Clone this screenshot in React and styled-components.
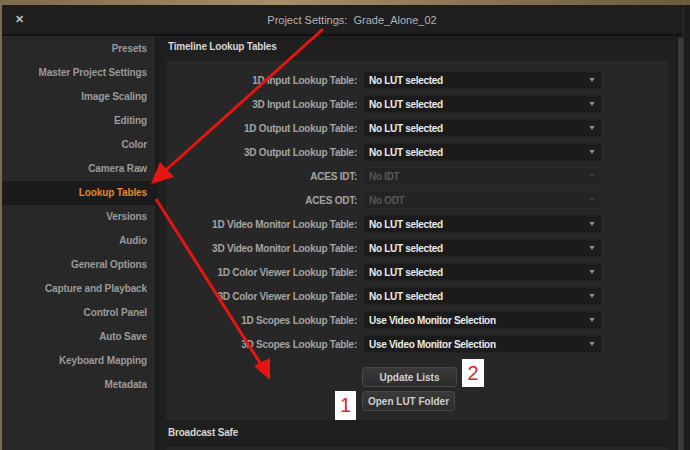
import React from 'react';
import styled, { createGlobalStyle } from 'styled-components';

const GlobalStyle = createGlobalStyle`
  body {
    margin: 0;
    background: #1b1b1b;
    font-family: "Liberation Sans", Arial, sans-serif;
  }
`;

const navItems = [
  'Presets',
  'Master Project Settings',
  'Image Scaling',
  'Editing',
  'Color',
  'Camera Raw',
  'Lookup Tables',
  'Versions',
  'Audio',
  'General Options',
  'Capture and Playback',
  'Control Panel',
  'Auto Save',
  'Keyboard Mapping',
  'Metadata',
];

const lutRows = [
  { label: '1D Input Lookup Table:', value: 'No LUT selected' },
  { label: '3D Input Lookup Table:', value: 'No LUT selected' },
  { label: '1D Output Lookup Table:', value: 'No LUT selected' },
  { label: '3D Output Lookup Table:', value: 'No LUT selected' },
  { label: 'ACES IDT:', value: 'No IDT', disabled: true },
  { label: 'ACES ODT:', value: 'No ODT', disabled: true },
  { label: '1D Video Monitor Lookup Table:', value: 'No LUT selected' },
  { label: '3D Video Monitor Lookup Table:', value: 'No LUT selected' },
  { label: '1D Color Viewer Lookup Table:', value: 'No LUT selected' },
  { label: '3D Color Viewer Lookup Table:', value: 'No LUT selected' },
  { label: '1D Scopes Lookup Table:', value: 'Use Video Monitor Selection' },
  { label: '3D Scopes Lookup Table:', value: 'Use Video Monitor Selection' },
];

const App = () => {
  return (
    <Screen>
      <GlobalStyle />
      <Dialog>
        <TitleBar>
          <CloseButton>✕</CloseButton>
          <Title>Project Settings:&nbsp; Grade_Alone_02</Title>
        </TitleBar>
        <Body>
          <Sidebar>
            {navItems.map((item) => (
              <NavItem key={item} $active={item === 'Lookup Tables'}>
                {item}
              </NavItem>
            ))}
          </Sidebar>
          <Content>
            <SectionTitle>Timeline Lookup Tables</SectionTitle>
            <Panel>
              {lutRows.map((row) => (
                <Row key={row.label}>
                  <Label>{row.label}</Label>
                  <Select $disabled={row.disabled}>
                    <span>{row.value}</span>
                    <Caret $disabled={row.disabled} />
                  </Select>
                </Row>
              ))}
              <Buttons>
                <Button $width={95}>Update Lists</Button>
                <Button $width={93}>Open LUT Folder</Button>
              </Buttons>
            </Panel>
            <SectionTitle $top={2}>Broadcast Safe</SectionTitle>
            <Panel />
          </Content>
          <Scrollbar>
            <Thumb />
          </Scrollbar>
        </Body>
      </Dialog>
      <Backdrop />

      <Arrows width="690" height="450" viewBox="0 0 690 450">
        <line x1="323" y1="29" x2="166" y2="170" stroke="#e8140f" strokeWidth="3" />
        <polygon points="151,184 160,162 174,177" fill="#e8140f" />
        <line x1="156" y1="199" x2="262" y2="366" stroke="#e8140f" strokeWidth="3" />
        <polygon points="270,380 254,366 270,358" fill="#e8140f" />
      </Arrows>
      <Marker $x={462} $y={359} $w={22} $h={28}>2</Marker>
      <Marker $x={335} $y={391} $w={21} $h={29}>1</Marker>
    </Screen>
  );
};

export default App;

const Screen = styled.div`
  position: relative;
  width: 690px;
  height: 450px;
  overflow: hidden;
  background: linear-gradient(to right, #7d6a4c 0, #a58e68 40%, #6b5a40 100%);
`;

const Backdrop = styled.div`
  position: absolute;
  right: 0;
  top: 5px;
  width: 6px;
  bottom: 0;
  background: #1c1c1c;
  border-left: 1px solid #2e2e2e;
`;

const Dialog = styled.div`
  display: flex;
  flex-direction: column;
  width: 682px;
  height: 445px;
  margin: 5px 0 0 2px;
  background: #1f1f1f;
`;

const TitleBar = styled.div`
  position: relative;
  display: flex;
  align-items: center;
  justify-content: center;
  height: 29px;
  background: #1e1e1e;
  border-bottom: 2px solid #111111;
`;

const CloseButton = styled.span`
  position: absolute;
  left: 13px;
  top: 8px;
  color: #bdbdbd;
  font-size: 11px;
  font-weight: bold;
`;

const Title = styled.div`
  margin-left: 18px;
  color: #b4b4b4;
  font-size: 11px;
`;

const Body = styled.div`
  display: flex;
  flex: 1;
  min-height: 0;
`;

const Sidebar = styled.div`
  display: flex;
  flex-direction: column;
  width: 153px;
  flex-shrink: 0;
  padding-top: 1px;
  background: #282828;
  border-right: 3px solid #1b1b1b;
`;

const NavItem = styled.div`
  height: 24px;
  line-height: 24px;
  padding-right: 8px;
  text-align: right;
  font-size: 10px;
  font-weight: bold;
  letter-spacing: -0.12px;
  color: ${(p) => (p.$active ? '#e0882e' : '#9a9a9a')};
  background: ${(p) => (p.$active ? '#1b1b1b' : 'transparent')};
`;

const Content = styled.div`
  flex: 1;
  display: flex;
  flex-direction: column;
  padding: 0 8px;
  background: #1f1f1f;
  overflow: hidden;
`;

const SectionTitle = styled.div`
  height: 20px;
  line-height: 20px;
  margin: ${(p) => p.$top || 0}px 0 4px;
  padding: 1px 0 0 2px;
  color: #d6d6d6;
  font-size: 10px;
  font-weight: bold;
  letter-spacing: -0.2px;
  flex-shrink: 0;
`;

const Panel = styled.div`
  display: flex;
  flex-direction: column;
  gap: 6px;
  padding: 10px 0 9px;
  background: #272727;
  flex-shrink: 0;
  min-height: 20px;
`;

const Row = styled.div`
  display: grid;
  grid-template-columns: 191px 239px;
  column-gap: 6px;
  align-items: center;
  height: 18px;
`;

const Label = styled.div`
  text-align: right;
  color: #a4a4a4;
  font-size: 10px;
  font-weight: bold;
  letter-spacing: -0.25px;
  white-space: nowrap;
`;

const Select = styled.div`
  display: flex;
  align-items: center;
  justify-content: space-between;
  height: 18px;
  padding: 0 6px 0 5px;
  box-sizing: border-box;
  border-radius: 2px;
  background: ${(p) => (p.$disabled ? '#242424' : '#1b1b1b')};
  border: 1px solid ${(p) => (p.$disabled ? '#2a2a2a' : '#222222')};
  color: ${(p) => (p.$disabled ? '#575757' : '#ececec')};
  font-size: 10px;
  font-weight: bold;
  letter-spacing: -0.3px;
`;

const Caret = styled.span`
  width: 0;
  height: 0;
  border-left: 3px solid transparent;
  border-right: 3px solid transparent;
  border-top: 4px solid ${(p) => (p.$disabled ? '#3c3c3c' : '#8a8a8a')};
`;

const Buttons = styled.div`
  display: flex;
  flex-direction: column;
  gap: 4px;
  margin: 8px 0 0 196px;
`;

const Button = styled.button`
  width: ${(p) => p.$width}px;
  height: 20px;
  padding: 0;
  border: 1px solid #474747;
  border-radius: 3px;
  background: linear-gradient(#3a3a3a, #2c2c2c);
  color: #cfcfcf;
  font-family: "Liberation Sans", Arial, sans-serif;
  font-size: 10px;
  font-weight: bold;
`;

const Scrollbar = styled.div`
  width: 8px;
  flex-shrink: 0;
  padding: 1px 1px 0 2px;
  box-sizing: border-box;
  background: #1c1c1c;
`;

const Thumb = styled.div`
  height: 100%;
  border-radius: 3px 3px 0 0;
  background: #3a3a3a;
`;

const Arrows = styled.svg`
  position: absolute;
  left: 0;
  top: 0;
  pointer-events: none;
`;

const Marker = styled.div`
  position: absolute;
  left: ${(p) => p.$x}px;
  top: ${(p) => p.$y}px;
  width: ${(p) => p.$w}px;
  height: ${(p) => p.$h}px;
  display: flex;
  align-items: center;
  justify-content: center;
  background: #ffffff;
  color: #d42a2a;
  font-family: "Liberation Sans", Arial, sans-serif;
  font-size: 20px;
`;
